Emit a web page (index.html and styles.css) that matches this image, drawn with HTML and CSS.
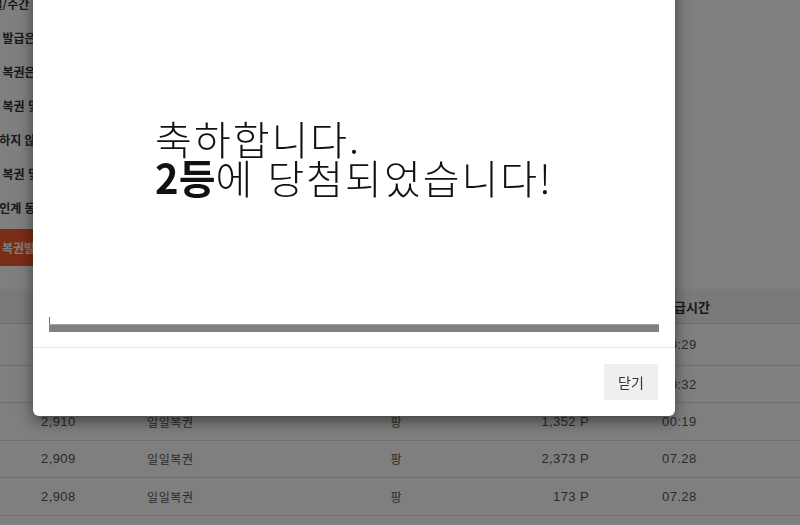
FILE: index.html
```html
<!DOCTYPE html>
<html lang="ko">
<head>
<meta charset="utf-8">
<title>복권</title>
<link rel="stylesheet" href="styles.css">
</head>
<body>
<div class="page">
  <ul class="notice">
    <li>복권은 일/주간 발급 한도가 있습니다.</li>
    <li>일일복권 발급은 로그인 후 가능합니다.</li>
    <li>당첨안된 복권은 자동으로 폐기됩니다.</li>
    <li>자동발급 복권 및 포인트는 환불되지 않습니다.</li>
    <li>당첨확인하지 않은 복권은 소멸됩니다.</li>
    <li>고액당첨 복권 및 포인트는 확인 후 지급됩니다.</li>
    <li>당첨금본인계 동의 후 지급됩니다.</li>
  </ul>
  <button class="issue-btn">복권발급하기</button>

  <div class="table">
    <div class="row head">
      <div class="c1">번호</div>
      <div class="c2">복권종류</div>
      <div class="c3">단위</div>
      <div class="c4">당첨포인트</div>
      <div class="c5">발급시간</div>
    </div>
    <div class="row first">
      <div class="c1">2,912</div>
      <div class="c2">일일복권</div>
      <div class="c3">팡</div>
      <div class="c4">512 P</div>
      <div class="c5">00:29</div>
    </div>
    <div class="row">
      <div class="c1">2,911</div>
      <div class="c2">일일복권</div>
      <div class="c3">팡</div>
      <div class="c4">824 P</div>
      <div class="c5">00:32</div>
    </div>
    <div class="row">
      <div class="c1">2,910</div>
      <div class="c2">일일복권</div>
      <div class="c3">팡</div>
      <div class="c4">1,352 P</div>
      <div class="c5">00:19</div>
    </div>
    <div class="row">
      <div class="c1">2,909</div>
      <div class="c2">일일복권</div>
      <div class="c3">팡</div>
      <div class="c4">2,373 P</div>
      <div class="c5">07.28</div>
    </div>
    <div class="row">
      <div class="c1">2,908</div>
      <div class="c2">일일복권</div>
      <div class="c3">팡</div>
      <div class="c4">173 P</div>
      <div class="c5">07.28</div>
    </div>
    <div class="row">
      <div class="c1">2,907</div>
      <div class="c2">일일복권</div>
      <div class="c3">팡</div>
      <div class="c4">96 P</div>
      <div class="c5">07.27</div>
    </div>
  </div>
</div>

<div class="backdrop"></div>

<div class="modal">
  <div class="modal-body">
    <div class="message-wrap">
      <div class="message">축하합니다.<br><b>2등</b>에 당첨되었습니다!</div>
    </div>
    <div class="progress">
      <div class="tick"></div>
      <div class="bar"></div>
    </div>
  </div>
  <div class="modal-footer">
    <button class="close-btn">닫기</button>
  </div>
</div>
</body>
</html>
```
FILE: styles.css
```css
html, body {
  margin: 0;
  padding: 0;
  background: #ffffff;
  overflow: hidden;
  font-family: "Noto Sans CJK KR", "Liberation Sans", sans-serif;
}

.page {
  width: 800px;
  margin-top: -13px;
}

.notice {
  list-style: none;
  margin: 0 0 0 -45px;
  padding: 0;
}

.notice li {
  height: 34px;
  line-height: 34px;
  font-size: 12px;
  font-weight: bold;
  color: #333333;
  white-space: nowrap;
}

.issue-btn {
  display: block;
  margin: 4px 0 0 -45px;
  width: 150px;
  height: 37px;
  border: none;
  background: #f65a2c;
  color: #ffffff;
  font-family: "Noto Sans CJK KR", sans-serif;
  font-size: 12px;
  font-weight: bold;
  text-align: left;
  padding: 0 0 0 47px;
}

.table {
  margin-top: 23px;
  font-size: 12px;
  color: #555555;
}

.row {
  display: grid;
  grid-template-columns: 130px 210px 112px 157px 191px;
  align-items: center;
  height: 36.4px;
  border-bottom: 1px solid #dddddd;
}

.row.head {
  height: 34px;
  background: #f4f4f4;
  color: #333333;
  font-weight: bold;
  font-size: 13px;
}

.row.first {
  height: 41px;
}

.c1 {
  padding-left: 41px;
  font-family: "Liberation Sans", sans-serif;
  font-size: 13px;
  letter-spacing: 0.4px;
}

.c2 {
  padding-left: 17px;
  letter-spacing: 0.6px;
}

.c3 {
  text-align: center;
}

.c4 {
  text-align: right;
  padding-right: 20px;
  font-family: "Liberation Sans", sans-serif;
  font-size: 13px;
  letter-spacing: 0.4px;
}

.c5 {
  padding-left: 53px;
  font-family: "Liberation Sans", sans-serif;
  font-size: 13px;
  letter-spacing: 0.4px;
}

.head .c1, .head .c2, .head .c3, .head .c4, .head .c5 {
  font-family: "Noto Sans CJK KR", sans-serif;
  font-size: 13px;
  letter-spacing: 0;
}

.backdrop {
  position: fixed;
  inset: 0;
  background: rgba(0, 0, 0, 0.5);
}

.modal {
  position: fixed;
  left: 33px;
  top: -40px;
  width: 642px;
  background: #ffffff;
  border-radius: 6px;
  box-shadow: 0 5px 15px rgba(0, 0, 0, 0.5);
}

.modal-body {
  padding: 16px 16px 15px;
}

.message-wrap {
  margin-top: 143px;
  display: flex;
  justify-content: center;
}

.message {
  text-align: left;
  font-size: 40px;
  line-height: 39px;
  letter-spacing: 2px;
  color: #111111;
  font-weight: 300;
}

.message b {
  font-weight: bold;
  letter-spacing: 0;
}

.progress {
  margin-top: 120px;
}

.tick {
  width: 0;
  height: 7px;
  border-left: 1px solid #6e6e6e;
}

.bar {
  height: 7px;
  border-top: 1px solid #a4a4a4;
  background: #808080;
}

.modal-footer {
  border-top: 1px solid #e5e5e5;
  padding: 16px 17px 16px 16px;
  display: flex;
  justify-content: flex-end;
}

.close-btn {
  height: 36px;
  width: 54px;
  border: none;
  background: #efefef;
  color: #333333;
  font-family: "Noto Sans CJK KR", sans-serif;
  font-size: 14px;
  padding: 0;
}
```
